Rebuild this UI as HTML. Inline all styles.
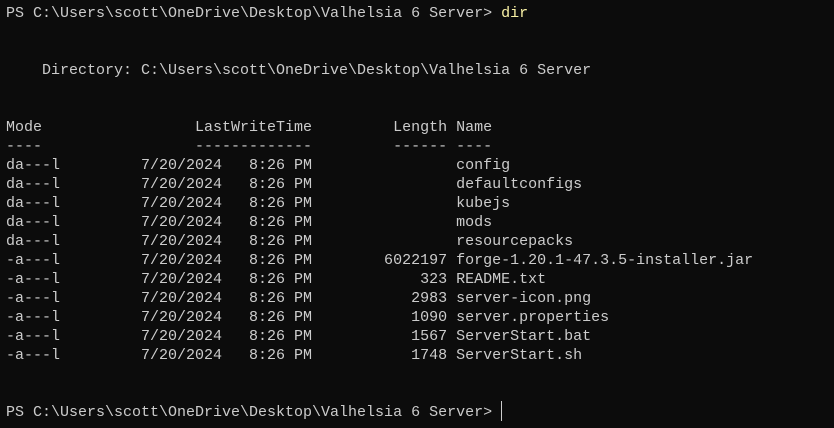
<!DOCTYPE html>
<html><head><meta charset="utf-8"><style>
html,body{margin:0;padding:0;background:#0c0c0c;width:834px;height:428px;overflow:hidden}
pre{position:absolute;left:6px;top:4px;margin:0;font-family:"Liberation Mono",monospace;font-size:15px;line-height:19px;color:#cccccc;white-space:pre}
.y{color:#f9f1a5}
.cur{position:absolute;left:501px;top:401px;width:1px;height:20px;background:#cccccc}
</style></head><body>
<pre>PS C:\Users\scott\OneDrive\Desktop\Valhelsia 6 Server&gt; <span class="y">dir</span>


    Directory: C:\Users\scott\OneDrive\Desktop\Valhelsia 6 Server


Mode                 LastWriteTime         Length Name
----                 -------------         ------ ----
da---l         7/20/2024   8:26 PM                config
da---l         7/20/2024   8:26 PM                defaultconfigs
da---l         7/20/2024   8:26 PM                kubejs
da---l         7/20/2024   8:26 PM                mods
da---l         7/20/2024   8:26 PM                resourcepacks
-a---l         7/20/2024   8:26 PM        6022197 forge-1.20.1-47.3.5-installer.jar
-a---l         7/20/2024   8:26 PM            323 README.txt
-a---l         7/20/2024   8:26 PM           2983 server-icon.png
-a---l         7/20/2024   8:26 PM           1090 server.properties
-a---l         7/20/2024   8:26 PM           1567 ServerStart.bat
-a---l         7/20/2024   8:26 PM           1748 ServerStart.sh


PS C:\Users\scott\OneDrive\Desktop\Valhelsia 6 Server&gt; </pre>
<div class="cur"></div>
</body></html>
